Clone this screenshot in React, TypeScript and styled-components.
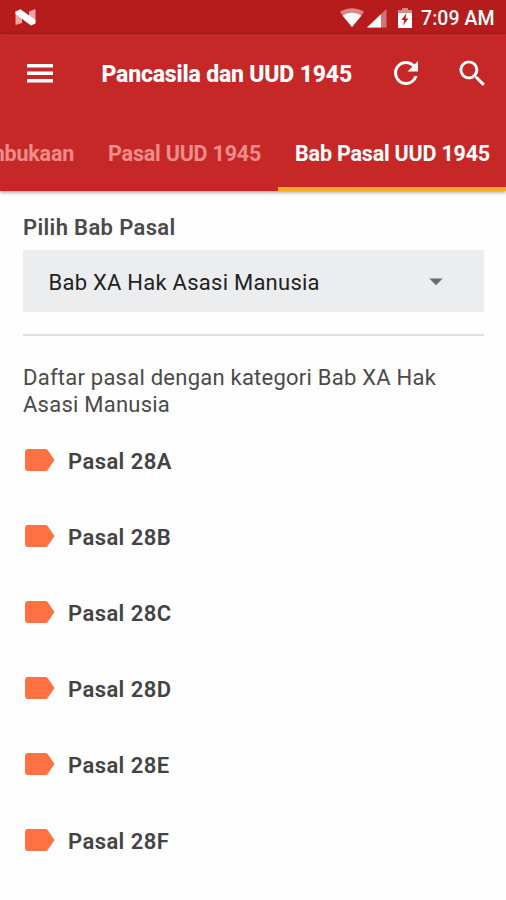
import React from 'react';
import styled, { createGlobalStyle } from 'styled-components';

const GlobalStyle = createGlobalStyle`
  * { box-sizing: border-box; }
  body { margin: 0; background: #fefefe; font-family: Roboto, sans-serif; }
`;

const Screen = styled.div`
  width: 506px;
  height: 900px;
  overflow: hidden;
  background: #fefefe;
`;

const StatusBar = styled.div`
  height: 34px;
  display: flex;
  align-items: center;
  padding: 2px 11px 0 15px;
  background: #b71c1c;
  color: #fff;
`;

const StatusIcons = styled.div`
  display: flex;
  align-items: center;
  margin-left: auto;
`;

const Clock = styled.time`
  width: 74px;
  margin-left: 9px;
  padding-top: 2px;
  font-size: 19.5px;
  font-weight: 500;
  line-height: 30px;
  white-space: nowrap;
  letter-spacing: 0.05px;
`;

const Header = styled.header`
  height: 157px;
  background: #c62828;
  color: #fff;
  box-shadow: 0 1px 4px rgba(0, 0, 0, 0.45);
`;

const Toolbar = styled.div`
  height: 80px;
  display: flex;
  align-items: center;
`;

const IconButton = styled.button<{ $left: number }>`
  display: flex;
  padding: 0;
  margin: 0 0 2px ${p => p.$left}px;
  border: 0;
  background: none;
  color: inherit;
`;

const Title = styled.h1`
  width: 266px;
  margin: 0 0 0 48.5px;
  padding-top: 2px;
  font-size: 23px;
  font-weight: 800;
  line-height: 30px;
  letter-spacing: -0.18px;
  white-space: nowrap;
`;

const Tabs = styled.nav`
  height: 77px;
  display: flex;
  justify-content: flex-end;
`;

const Tab = styled.div<{ $active?: boolean }>`
  flex: none;
  padding: 26px ${p => (p.$active ? 16 : 17)}px 0 17px;
  border-bottom: 4px solid ${p => (p.$active ? '#ffa726' : 'transparent')};
  color: ${p => (p.$active ? '#fff' : '#ee8d8b')};
  font-size: 21.5px;
  font-weight: 700;
  line-height: 28px;
  letter-spacing: -0.2px;
  white-space: nowrap;
`;

const Content = styled.main`
  padding: 22px 22px 0 23px;
  color: #4a4a4a;
`;

const Label = styled.div`
  height: 37px;
  font-size: 22px;
  font-weight: 600;
  line-height: 29px;
  letter-spacing: 0.35px;
`;

const Select = styled.div`
  height: 62px;
  display: flex;
  align-items: center;
  justify-content: space-between;
  padding: 2px 41px 0 25.5px;
  background: #ecedef;
  color: #222;
  font-size: 22px;
  letter-spacing: 0.25px;
`;

const Divider = styled.hr`
  height: 2px;
  margin: 22px 0 29px;
  border: 0;
  background: #dfdfdf;
`;

const Description = styled.p`
  margin: 0;
  font-size: 22px;
  line-height: 26.5px;
  letter-spacing: 0.24px;
`;

const List = styled.ul`
  margin: 5px 0 0;
  padding: 0;
  list-style: none;
`;

const Item = styled.li`
  height: 76px;
  display: flex;
  align-items: center;
  gap: 13px;
  padding-left: 2px;
  color: #434343;
  font-size: 22px;
  font-weight: 600;
  letter-spacing: 0.42px;
`;

const articles = ['28A', '28B', '28C', '28D', '28E', '28F'];

const NougatIcon = () => (
  <svg width="21" height="18" viewBox="0 0 21 18">
    <path d="M.5 2.500 7 3v11L.5 16zM14 2.500l6.500-2.500V13L14 13z" fill="#eba5a5" />
    <path d="M.5 2.500 5.500.3 20.500 11v3.500l-4.500 2L.5 5z" fill="#fff" />
  </svg>
);

const WifiIcon = () => (
  <svg width="24" height="20" viewBox="0 0 24 20">
    <path d="M0 4Q12-3.500 24 4L12 19z" fill="#dc8585" />
    <path d="M2.500 7.500Q12 2 21.500 7.500L12 19z" fill="#fff" />
  </svg>
);

const SignalIcon = () => (
  <svg width="21" height="19" viewBox="0 0 21 19">
    <path d="M20.500 0v18.500H1z" fill="#d57474" />
    <path d="M15 5.300v13.200H1z" fill="#fff" />
  </svg>
);

const BatteryIcon = () => (
  <svg width="14" height="21" viewBox="0 0 14 21">
    <path d="M4 0h6v2h4v4H0V2h4z" fill="#dc8585" />
    <path d="M0 5h14v15H0z" fill="#fff" />
    <path d="M8.500 5 3.500 12h2.800L5 17.500l5.500-7h-3z" fill="#b71c1c" />
  </svg>
);

const MenuIcon = () => (
  <svg width="26" height="19" viewBox="0 0 26 19" fill="currentColor">
    <path d="M0 0h26v3.600H0zM0 7.500h26v3.600H0zM0 15h26v3.600H0z" />
  </svg>
);

const RefreshIcon = () => (
  <svg width="36" height="36" viewBox="0 0 24 24" fill="currentColor">
    <path d="M17.650 6.350A7.958 7.958 0 0 0 12 4a8 8 0 1 0 7.730 10h-2.080A6 6 0 1 1 12 6c1.660 0 3.140.69 4.220 1.780L13 11h7V4z" />
  </svg>
);

const SearchIcon = () => (
  <svg width="35" height="35" viewBox="0 0 24 24" fill="currentColor">
    <path d="M15.500 14h-.79l-.28-.27A6.471 6.471 0 0 0 16 9.500 6.500 6.500 0 1 0 9.500 16c1.610 0 3.090-.59 4.230-1.570l.27.28v.79l5 4.990L20.490 19zm-6 0a4.500 4.500 0 1 1 0-9 4.500 4.500 0 0 1 0 9z" />
  </svg>
);

const CaretIcon = () => (
  <svg width="14" height="8" viewBox="0 0 14 8">
    <path d="M.3.5h13.400L7 7.300z" fill="#6a6b6c" />
  </svg>
);

const LabelIcon = () => (
  <svg width="30" height="24" viewBox="0 0 30 24">
    <path d="M3 0H20.500Q22 0 23 1.500L29.500 11 23 20.500Q22 22 20.500 22H3Q0 22 0 19V3Q0 0 3 0z" fill="#ff7043" />
  </svg>
);

const WifiSlot = styled.span`
  display: flex;
  margin-right: 2px;
`;

const SignalSlot = styled.span`
  display: flex;
  margin-right: 11px;
`;

export default function App() {
  return (
    <>
      <GlobalStyle />
      <Screen>
        <StatusBar>
          <NougatIcon />
          <StatusIcons>
            <WifiSlot><WifiIcon /></WifiSlot>
            <SignalSlot><SignalIcon /></SignalSlot>
            <BatteryIcon />
            <Clock>7:09 AM</Clock>
          </StatusIcons>
        </StatusBar>
        <Header>
          <Toolbar>
            <IconButton $left={27} aria-label="Menu"><MenuIcon /></IconButton>
            <Title>Pancasila dan UUD 1945</Title>
            <IconButton $left={20} aria-label="Refresh"><RefreshIcon /></IconButton>
            <IconButton $left={31} aria-label="Search"><SearchIcon /></IconButton>
          </Toolbar>
          <Tabs>
            <Tab>Pembukaan</Tab>
            <Tab>Pasal UUD 1945</Tab>
            <Tab $active>Bab Pasal UUD 1945</Tab>
          </Tabs>
        </Header>
        <Content>
          <Label>Pilih Bab Pasal</Label>
          <Select>
            Bab XA Hak Asasi Manusia
            <CaretIcon />
          </Select>
          <Divider />
          <Description>Daftar pasal dengan kategori Bab XA Hak Asasi Manusia</Description>
          <List>
            {articles.map(a => (
              <Item key={a}><LabelIcon />Pasal {a}</Item>
            ))}
          </List>
        </Content>
      </Screen>
    </>
  );
}
